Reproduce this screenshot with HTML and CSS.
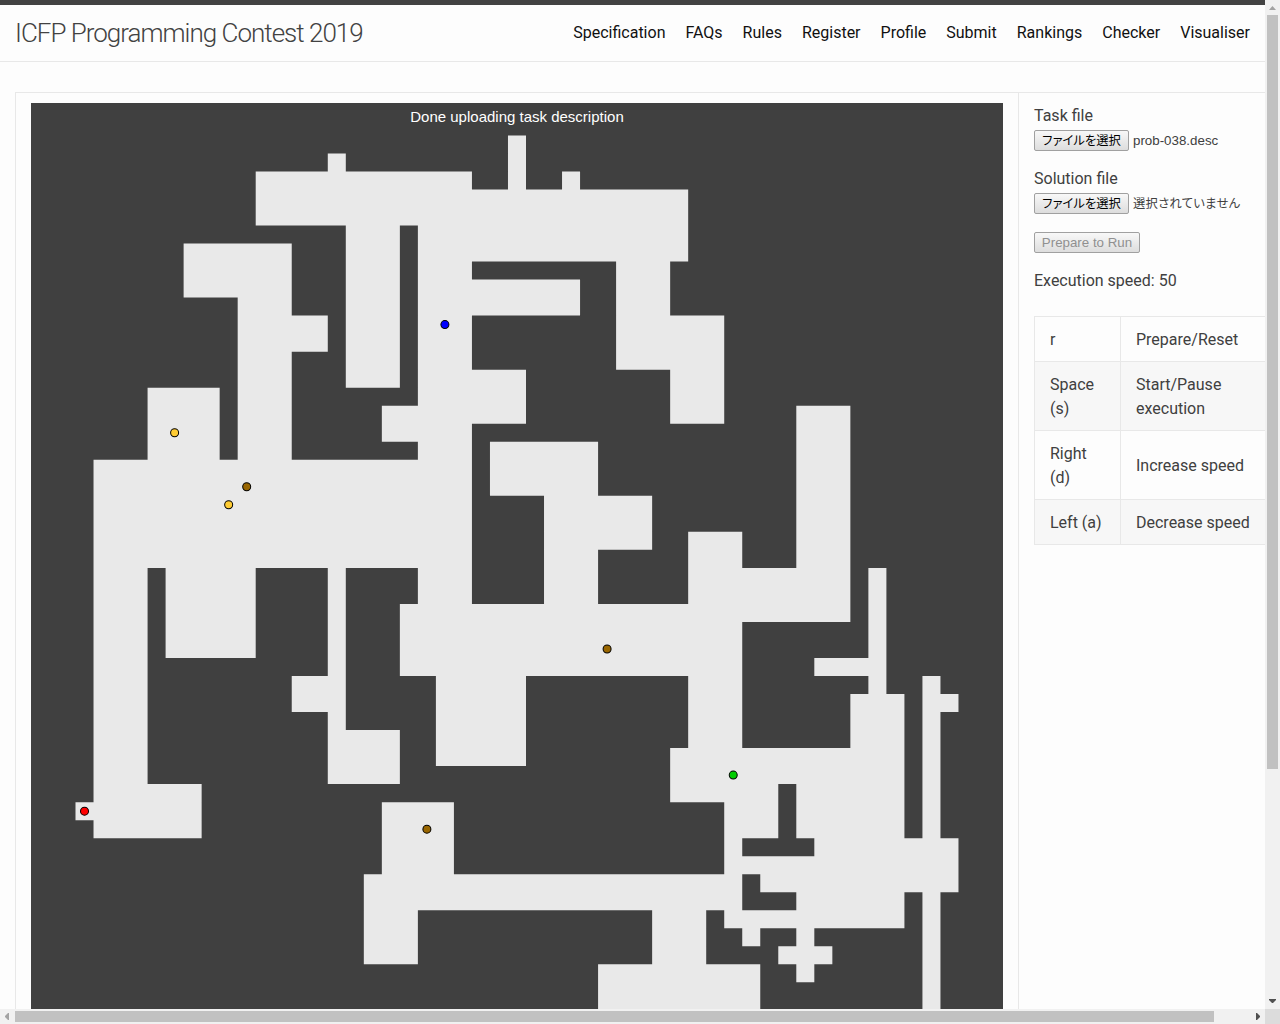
FILE: index.html
```html
<!DOCTYPE html>
<html lang="en">
<head>
<meta charset="utf-8">
<title>ICFP Programming Contest 2019</title>
<link rel="stylesheet" href="styles.css">
</head>
<body>
<div class="window">
  <div class="viewport">
    <header class="site-header">
      <a class="site-title">ICFP Programming Contest 2019</a>
      <nav class="site-nav">
        <a>Specification</a><a>FAQs</a><a>Rules</a><a>Register</a><a>Profile</a><a>Submit</a><a>Rankings</a><a>Checker</a><a>Visualiser</a>
      </nav>
    </header>
    <main class="visualiser">
      <section class="map-cell">
        <svg class="map" width="972" height="972" viewBox="0 0 972 972">
          <rect width="972" height="972" fill="#404040"/>
          <text x="486" y="19" text-anchor="middle" class="map-status">Done uploading task description</text>
          <g transform="translate(44.5 32.4) scale(18.02)">
            <path fill="#e9e9e9" fill-rule="evenodd" d="M24 0H25V3H27V2H28V3H34V7H33V10H36V16H33V13H30V7H22V8H28V10H22V13H25V16H22V26H26V20H23V17H29V20H32V23H29V26H34V22H37V24H40V15H43V27H37V34H43V31H44V30H41V29H44V24H45V31H46V39H47V30H48V31H49V32H48V39H49V42H48V50H47V42H46V44H41V45H42V46H41V47H40V46H39V45H40V44H38V45H37V44H36V43H35V46H38V50H29V46H32V43H19V46H16V41H17V37H21V41H36V37H33V34H34V30H25V35H20V30H18V26H19V24H15V33H18V36H14V32H12V30H14V24H10V29H5V24H4V36H7V39H1V38H0V37H1V18H4V14H8V18H9V9H6V6H12V10H14V12H12V18H19V17H17V15H19V5H18V14H15V5H10V2H14V1H15V2H22V3H24ZM39 36H40V39H41V40H37V39H39ZM37 41H38V42H40V43H37Z"/>
            <g stroke="#000" stroke-width=".056">
              <circle cx="20.5" cy="10.5" r=".222" fill="#00f"/>
              <circle cx="5.5" cy="16.5" r=".222" fill="#ffcc33"/>
              <circle cx="8.5" cy="20.5" r=".222" fill="#ffcc33"/>
              <circle cx="9.5" cy="19.5" r=".222" fill="#996600"/>
              <circle cx="29.5" cy="28.5" r=".222" fill="#996600"/>
              <circle cx="19.5" cy="38.5" r=".222" fill="#996600"/>
              <circle cx="36.5" cy="35.5" r=".222" fill="#00cc00"/>
              <circle cx=".5" cy="37.5" r=".222" fill="#f00"/>
            </g>
          </g>
        </svg>
      </section>
      <aside class="controls">
        <div class="field">
          <div>Task file</div>
          <div class="file"><span class="button jp">ファイルを選択</span><span class="file-name">prob-038.desc</span></div>
        </div>
        <div class="field">
          <div>Solution file</div>
          <div class="file"><span class="button jp">ファイルを選択</span><span class="file-name jp-name">選択されていません</span></div>
        </div>
        <div class="run"><span class="button disabled">Prepare to Run</span></div>
        <div class="speed">Execution speed: 50</div>
        <table class="keys">
          <tr><td>r</td><td>Prepare/Reset</td></tr>
          <tr><td>Space (s)</td><td>Start/Pause execution</td></tr>
          <tr><td>Right (d)</td><td>Increase speed</td></tr>
          <tr><td>Left (a)</td><td>Decrease speed</td></tr>
        </table>
      </aside>
    </main>
  </div>
  <div class="scroll vertical">
    <svg width="15" height="15"><path d="M4 10L7.5 6L11 10Z" fill="#a3a3a3"/></svg>
    <div class="thumb"></div>
    <svg class="end" width="15" height="15"><path d="M4 5H11V6L8 9H7L4 6Z" fill="#505050"/></svg>
  </div>
  <div class="scroll horizontal">
    <svg width="15" height="15"><path d="M9 4V11H8L5 8V7L8 4Z" fill="#a3a3a3"/></svg>
    <div class="thumb"></div>
    <svg class="end" width="15" height="15"><path d="M6 4H7L10 7V8L7 11H6Z" fill="#505050"/></svg>
  </div>
  <div class="corner"></div>
</div>
</body>
</html>
```
FILE: styles.css
```css
* { box-sizing: border-box; }
body {
  margin: 0;
  overflow: hidden;
  background: #fdfdfd;
  color: #404040;
  font: 16px/24px Roboto, sans-serif;
}
.window {
  display: grid;
  grid-template: minmax(0, 1fr) 15px / minmax(0, 1fr) 15px;
  width: 1280px;
  height: 1024px;
}
.viewport { overflow: hidden; }
.site-header {
  display: flex;
  justify-content: space-between;
  height: 62px;
  padding: 0 15px;
  border-top: 5px solid #424242;
  border-bottom: 1px solid #e8e8e8;
  line-height: 55px;
}
.site-title {
  padding-top: 1px;
  color: #424242;
  font-size: 26px;
  font-weight: 300;
  letter-spacing: -1px;
}
.site-nav { display: flex; gap: 20px; color: #111; }
.visualiser {
  display: flex;
  width: 1270px;
  margin: 30px 0 0 15px;
  border: 1px solid #e8e8e8;
}
.map-cell {
  flex: none;
  padding: 10px 15px;
  border-right: 1px solid #e8e8e8;
}
.map { display: block; }
.map-status { fill: #fff; font: 15px "Liberation Sans", Arial, sans-serif; }
.controls { padding: 11px 15px; }
.field { height: 63px; }
.file { display: flex; align-items: center; gap: 4px; height: 25px; }
.button {
  display: flex;
  align-items: center;
  justify-content: center;
  height: 21px;
  border: 1px solid #a0a0a0;
  border-radius: 2px;
  background: linear-gradient(#f8f8f8, #ddd);
  color: #000;
  font: 13.333px/18px "Liberation Sans", Arial, sans-serif;
  white-space: nowrap;
}
.button.jp {
  width: 95px;
  padding-bottom: 2px;
  font: 12.3px/18px "Noto Sans CJK JP", sans-serif;
  font-feature-settings: "palt";
}
.button.disabled { width: 106px; color: #909090; }
.file-name {
  font: 13.333px/18px "Liberation Sans", Arial, sans-serif;
  white-space: nowrap;
}
.jp-name {
  padding-bottom: 2px;
  font: 12.3px/18px "Noto Sans CJK JP", sans-serif;
  font-feature-settings: "palt";
  letter-spacing: .3px;
}
.run { padding-top: 2px; }
.speed { margin-top: 16px; }
.keys {
  width: 240px;
  margin-top: 23px;
  border: 1px solid #e8e8e8;
  border-collapse: collapse;
}
.keys td { padding: 11px 15px 9px; border: 1px solid #e8e8e8; }
.keys td:first-child { width: 86px; }
.keys tr:nth-child(even) { background: #f7f7f7; }
.scroll { display: flex; background: #f1f1f1; }
.scroll svg { display: block; flex: none; }
.thumb { background: #c1c1c1; }
.vertical { flex-direction: column; }
.vertical .thumb { width: 11px; height: 754px; margin-left: 2px; }
.vertical .end { margin-top: auto; }
.horizontal .thumb { width: 1199px; height: 11px; margin-top: 2px; }
.horizontal .end { margin-left: auto; }
.corner { background: #dcdcdc; }
```
